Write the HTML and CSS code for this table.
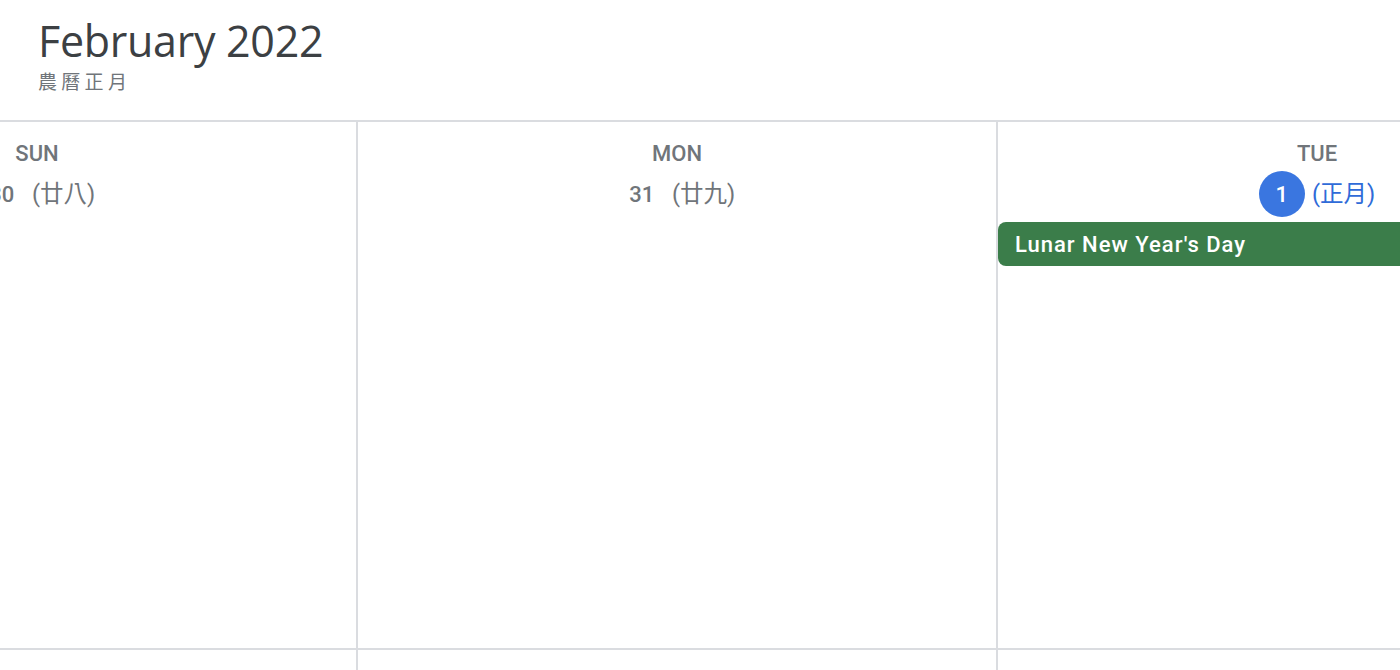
FILE: index.html
```html
<!DOCTYPE html>
<html lang="en">
<head>
<meta charset="utf-8">
<title>February 2022</title>
<link rel="stylesheet" href="styles.css">
</head>
<body>
<div class="page">
  <header class="head">
    <h1 class="title">February 2022</h1>
    <div class="subtitle">農曆正月</div>
  </header>
  <div class="grid">
    <div class="cell">
      <div class="dow">SUN</div>
      <div class="date"><span class="num">30</span><span class="lunar">(廿八)</span></div>
    </div>
    <div class="cell">
      <div class="dow">MON</div>
      <div class="date"><span class="num">31</span><span class="lunar">(廿九)</span></div>
    </div>
    <div class="cell">
      <div class="dow">TUE</div>
      <div class="date today"><span class="num">1</span><span class="lunar">(正月)</span></div>
      <div class="event">Lunar New Year's Day</div>
    </div>
    <div class="cell row2"></div>
    <div class="cell row2"></div>
    <div class="cell row2"></div>
  </div>
</div>
</body>
</html>
```
FILE: styles.css
```css
html, body {
  margin: 0;
  padding: 0;
  background: #ffffff;
  overflow: hidden;
}
.page {
  width: 1400px;
  height: 670px;
  overflow: hidden;
  font-family: Roboto, "Noto Sans CJK TC", sans-serif;
}
.head {
  height: 120px;
  box-sizing: border-box;
  padding: 12px 0 0 38px;
}
.title {
  margin: 0;
  font-family: "Open Sans", Roboto, sans-serif;
  font-weight: 400;
  font-size: 43px;
  line-height: 58px;
  color: #3c4043;
  letter-spacing: -0.3px;
}
.subtitle {
  margin-top: 0;
  font-family: "Noto Sans CJK TC", sans-serif;
  font-size: 19px;
  line-height: 22px;
  letter-spacing: 4.3px;
  color: #70757a;
}
.grid {
  display: grid;
  grid-template-columns: repeat(3, 640px);
  grid-template-rows: 526px 40px;
  margin-left: -284px;
  width: 1920px;
  border-top: 2px solid #dadce0;
}
.cell {
  border-left: 2px solid #dadce0;
  display: flex;
  flex-direction: column;
  align-items: center;
  min-width: 0;
}
.row2 {
  border-top: 2px solid #dadce0;
}
.dow {
  margin-top: 20px;
  font-size: 22px;
  font-weight: 500;
  line-height: 24px;
  color: #70757a;
}
.date {
  margin-top: 5px;
  display: flex;
  align-items: center;
  justify-content: center;
  color: #70757a;
}
.num {
  width: 46px;
  height: 46px;
  border-radius: 50%;
  display: flex;
  align-items: center;
  justify-content: center;
  font-size: 22px;
  font-weight: 500;
}
.lunar {
  margin-left: 7px;
  font-family: Roboto, "Noto Sans CJK TC", sans-serif;
  font-size: 23.5px;
  line-height: 30px;
  font-weight: 400;
}
.today .num {
  background: #3a76e0;
  color: #ffffff;
}
.today .lunar {
  color: #2f6bd8;
}
.event {
  align-self: stretch;
  margin-top: 5px;
  height: 44px;
  box-sizing: border-box;
  padding-left: 17px;
  display: flex;
  align-items: center;
  background: #3b7d4a;
  border-radius: 8px 0 0 8px;
  color: #ffffff;
  font-size: 22px;
  font-weight: 500;
  letter-spacing: 1px;
}
```
